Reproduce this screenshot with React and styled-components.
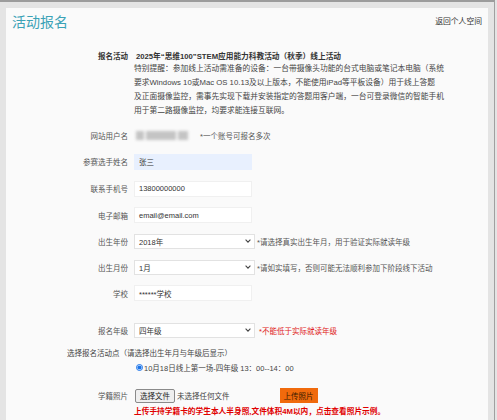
import React from "react";
import styled, { createGlobalStyle } from "styled-components";

const Global = createGlobalStyle`
  html, body { margin: 0; padding: 0; }
  body {
    background: #e4e4e4;
    font-family: "Liberation Sans", "Noto Sans CJK SC", sans-serif;
    color: #333;
  }
  * { box-sizing: border-box; }
`;

const Page = styled.div`
  width: 495px;
  height: 420px;
  overflow: hidden;
  border-top: 2px solid #9c9c9c;
  border-right: 1px solid #a0a0a0;
  padding: 6px 0 0 6px;
`;

const Panel = styled.div`
  width: 482px;
  height: 420px;
  background: #fafafa;
  display: flex;
  flex-direction: column;
`;

const Header = styled.div`
  height: 30px;
  display: flex;
  justify-content: space-between;
  align-items: flex-start;
  padding: 4px 6px 0 6px;
`;

const Title = styled.h1`
  margin: 0;
  font-size: 14px;
  line-height: 20px;
  font-weight: 400;
  color: #3ba2b6;
`;

const BackLink = styled.a`
  font-size: 7.8px;
  line-height: 20px;
  color: #333;
  text-decoration: none;
`;

const Row = styled.div`
  display: grid;
  grid-template-columns: 122px 1fr;
  column-gap: 6px;
  align-items: center;
  height: ${(p) => p.$h || 26}px;
  margin-top: ${(p) => p.$mt || 0}px;
  font-size: 7.5px;
`;

const Label = styled.div`
  text-align: right;
  color: ${(p) => (p.$bold ? "#333" : "#555")};
  font-weight: ${(p) => (p.$bold ? 700 : 400)};
  white-space: nowrap;
`;

const Value = styled.div`
  display: flex;
  align-items: center;
  white-space: nowrap;
  min-width: 0;
`;

const ActivityName = styled.div`
  font-weight: 700;
  color: #333;
  font-size: 7.7px;
  padding-left: 2px;
`;

const Notice = styled.div`
  margin-left: 128px;
  font-size: 7.75px;
  line-height: 14px;
  color: #444;
  span { display: block; white-space: nowrap; }
`;

const Blurred = styled.div`
  width: 56px;
  height: 9px;
  margin-left: 2px;
  display: flex;
  gap: 2px;
  filter: blur(1.4px);
  i {
    display: block;
    height: 100%;
    background: #c4c4c4;
  }
`;

const Hint = styled.span`
  color: ${(p) => (p.$red ? "#e02020" : "#555")};
  margin-left: ${(p) => p.$ml || 2}px;
  font-size: 7.5px;
`;

const TextBox = styled.div`
  width: 118px;
  height: 16px;
  background: ${(p) => (p.$filled ? "#e8f0fe" : "#fff")};
  border: 1px solid ${(p) => (p.$filled ? "#e8f0fe" : "#f0f0f0")};
  display: flex;
  align-items: center;
  padding-left: 4px;
  color: #333;
  font-size: 7.5px;
`;

const SelectBox = styled.div`
  width: 121px;
  height: 15px;
  background: #fff;
  border: 1px solid #e2e2e2;
  display: flex;
  align-items: center;
  justify-content: space-between;
  padding: 0 3px 0 4px;
  color: #333;
  font-size: 7.5px;
`;

const Chevron = () => (
  <svg width="6" height="4" viewBox="0 0 6 4">
    <path d="M0.6 0.7 L3 3.1 L5.4 0.7" fill="none" stroke="#444" strokeWidth="1.1" />
  </svg>
);

const Wide = styled.div`
  margin-top: ${(p) => p.$mt || 0}px;
  height: ${(p) => p.$h || 14}px;
  display: flex;
  align-items: center;
  padding-left: ${(p) => p.$pl || 0}px;
  font-size: 7.5px;
  color: #444;
  white-space: nowrap;
`;

const Radio = styled.input`
  width: 7px;
  height: 7px;
  margin: 0 1px 0 0;
  accent-color: #1a73e8;
`;

const FileButton = styled.button`
  height: 14px;
  padding: 0 4px;
  font-size: 7.5px;
  font-family: inherit;
  color: #222;
  background: #efefef;
  border: 1px solid #8a8a8a;
  border-radius: 2px;
  margin-left: 1px;
`;

const FileText = styled.span`
  margin-left: 2px;
  color: #444;
  font-size: 7.5px;
`;

const UploadButton = styled.button`
  height: 15px;
  padding: 0 4px;
  margin-left: 50px;
  font-size: 7.5px;
  font-family: inherit;
  color: #3a1a00;
  background: #f06a0c;
  border: none;
`;

const Warning = styled.div`
  font-weight: 700;
  color: #e00000;
  font-size: 7.7px;
`;

export default function App() {
  return (
    <>
      <Global />
      <Page>
        <Panel>
          <Header>
            <Title>活动报名</Title>
            <BackLink href="#">返回个人空间</BackLink>
          </Header>

          <Row $h={14} $mt={10}>
            <Label $bold>报名活动</Label>
            <Value>
              <ActivityName>2025年“思维100”STEM应用能力科教活动（秋季）线上活动</ActivityName>
            </Value>
          </Row>
          <Notice>
            <span>特别提醒：参加线上活动需准备的设备：一台带摄像头功能的台式电脑或笔记本电脑（系统</span>
            <span>要求Windows 10或Mac OS 10.13及以上版本，不能使用iPad等平板设备）用于线上答题</span>
            <span>及正面摄像监控，需事先实现下载并安装指定的答题用客户端，一台可登录微信的智能手机</span>
            <span>用于第二路摄像监控，均要求能连接互联网。</span>
          </Notice>

          <Row $h={26} $mt={4}>
            <Label>网站用户名</Label>
            <Value>
              <Blurred>
                <i style={{ width: 8 }} />
                <i style={{ width: 30 }} />
                <i style={{ width: 10 }} />
              </Blurred>
              <Hint $ml={8}>*一个账号可报名多次</Hint>
            </Value>
          </Row>
          <Row $h={27}>
            <Label>参赛选手姓名</Label>
            <Value>
              <TextBox $filled>张三</TextBox>
            </Value>
          </Row>
          <Row $h={27}>
            <Label>联系手机号</Label>
            <Value>
              <TextBox>13800000000</TextBox>
            </Value>
          </Row>
          <Row $h={26}>
            <Label>电子邮箱</Label>
            <Value>
              <TextBox>email@email.com</TextBox>
            </Value>
          </Row>
          <Row $h={26}>
            <Label>出生年份</Label>
            <Value>
              <SelectBox>
                <span>2018年</span>
                <Chevron />
              </SelectBox>
              <Hint>*请选择真实出生年月，用于验证实际就读年级</Hint>
            </Value>
          </Row>
          <Row $h={26}>
            <Label>出生月份</Label>
            <Value>
              <SelectBox>
                <span>1月</span>
                <Chevron />
              </SelectBox>
              <Hint>*请如实填写，否则可能无法顺利参加下阶段线下活动</Hint>
            </Value>
          </Row>
          <Row $h={26}>
            <Label>学校</Label>
            <Value>
              <TextBox>******学校</TextBox>
            </Value>
          </Row>

          <Row $h={26} $mt={11}>
            <Label>报名年级</Label>
            <Value>
              <SelectBox>
                <span>四年级</span>
                <Chevron />
              </SelectBox>
              <Hint $red $ml={4}>*不能低于实际就读年级</Hint>
            </Value>
          </Row>

          <Wide $mt={2} $pl={61}>选择报名活动点（请选择出生年月与年级后显示）</Wide>
          <Wide $mt={1} $pl={130}>
            <Radio type="radio" name="site" defaultChecked />
            <span>10月18日线上第一场-四年级 13：00--14：00</span>
          </Wide>

          <Row $h={14} $mt={14}>
            <Label>学籍照片</Label>
            <Value>
              <FileButton type="button">选择文件</FileButton>
              <FileText>未选择任何文件</FileText>
              <UploadButton type="button">上传照片</UploadButton>
            </Value>
          </Row>
          <Row $h={15} $mt={1}>
            <Label />
            <Value>
              <Warning>上传手持学籍卡的学生本人半身照,文件体积4M以内，点击查看照片示例。</Warning>
            </Value>
          </Row>
        </Panel>
      </Page>
    </>
  );
}
